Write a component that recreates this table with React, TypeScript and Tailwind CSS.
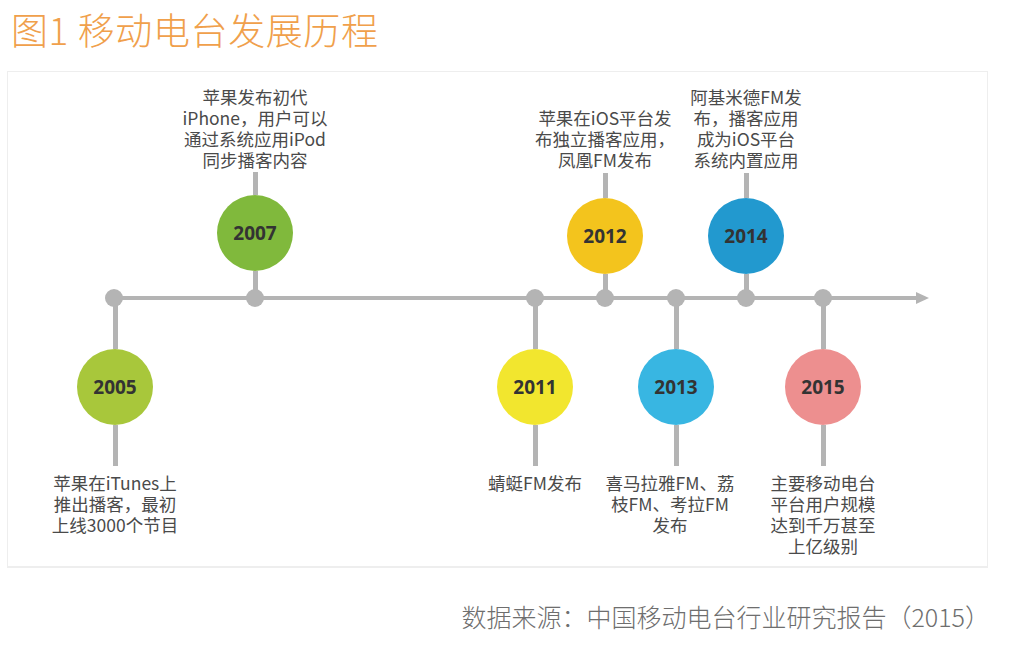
type Event = {
  year: string;
  side: "above" | "below";
  pos: string;
  circle: string;
  stemTop: string;
  stemBottom: string;
  text: string;
  lines: string[];
};

const events: Event[] = [
  {
    year: "2005",
    side: "below",
    pos: "left-[27px] top-[226px]",
    circle: "bg-[#a8c73b]",
    stemTop: "h-[51px]",
    stemBottom: "h-[41px]",
    text: "mt-[6px]",
    lines: ["苹果在iTunes上", "推出播客，最初", "上线3000个节目"],
  },
  {
    year: "2007",
    side: "above",
    pos: "left-[167px] bottom-[268px]",
    circle: "bg-[#80b93c]",
    stemTop: "h-[23px]",
    stemBottom: "h-[27px]",
    text: "mb-[2px]",
    lines: ["苹果发布初代", "iPhone，用户可以", "通过系统应用iPod", "同步播客内容"],
  },
  {
    year: "2011",
    side: "below",
    pos: "left-[447px] top-[226px]",
    circle: "bg-[#f2e62e]",
    stemTop: "h-[51px]",
    stemBottom: "h-[41px]",
    text: "mt-[6px]",
    lines: ["蜻蜓FM发布"],
  },
  {
    year: "2012",
    side: "above",
    pos: "left-[517px] bottom-[268px]",
    circle: "bg-[#f3c41d]",
    stemTop: "h-[25px]",
    stemBottom: "h-[24px]",
    text: "mb-[3px]",
    lines: ["苹果在iOS平台发", "布独立播客应用，", "凤凰FM发布"],
  },
  {
    year: "2013",
    side: "below",
    pos: "left-[588px] top-[226px]",
    circle: "bg-[#38b6e2]",
    stemTop: "h-[51px]",
    stemBottom: "h-[41px]",
    text: "mt-[6px] -translate-x-[6px]",
    lines: ["喜马拉雅FM、荔", "枝FM、考拉FM", "发布"],
  },
  {
    year: "2014",
    side: "above",
    pos: "left-[658px] bottom-[268px]",
    circle: "bg-[#2299cf]",
    stemTop: "h-[25px]",
    stemBottom: "h-[24px]",
    text: "mb-[3px]",
    lines: ["阿基米德FM发", "布，播客应用", "成为iOS平台", "系统内置应用"],
  },
  {
    year: "2015",
    side: "below",
    pos: "left-[735px] top-[226px]",
    circle: "bg-[#ed8f8f]",
    stemTop: "h-[51px]",
    stemBottom: "h-[41px]",
    text: "mt-[6px]",
    lines: ["主要移动电台", "平台用户规模", "达到千万甚至", "上亿级别"],
  },
];

const dots = [
  "left-[97px]",
  "left-[238px]",
  "left-[518px]",
  "left-[588px]",
  "left-[659px]",
  "left-[729px]",
  "left-[806px]",
];

function Label({ lines, className }: { lines: string[]; className: string }) {
  return (
    <div
      className={`flex flex-col items-center text-[17.5px] leading-[21px] text-[#4a4a4a] whitespace-nowrap ${className}`}
    >
      {lines.map((line) => (
        <span key={line}>{line}</span>
      ))}
    </div>
  );
}

function Node({ e }: { e: Event }) {
  const circle = (
    <div
      className={`w-[76px] h-[76px] rounded-full flex items-center justify-center ${e.circle}`}
    >
      <span className="font-['Open_Sans',sans-serif] font-bold text-[19px] text-[#333333]">
        {e.year}
      </span>
    </div>
  );
  return (
    <div className={`absolute w-[160px] flex flex-col items-center ${e.pos}`}>
      {e.side === "above" && <Label lines={e.lines} className={e.text} />}
      <div className={`w-[5px] bg-[#b4b4b4] ${e.stemTop}`} />
      {circle}
      <div className={`w-[5px] bg-[#b4b4b4] ${e.stemBottom}`} />
      {e.side === "below" && <Label lines={e.lines} className={e.text} />}
    </div>
  );
}

export default function App() {
  return (
    <div className="w-[1010px] h-[647px] bg-white overflow-hidden font-['Noto_Sans_CJK_SC',sans-serif]">
      <h1 className="mt-[11px] ml-[11px] text-[37px] leading-[37px] tracking-[0.6px] font-light text-[#f0a04b]">
        图1 移动电台发展历程
      </h1>

      <div className="relative mt-[23px] ml-[7px] w-[981px] h-[497px] border border-[#eeeeee] border-b-2">
        {/* axis */}
        <div className="absolute left-[106px] top-[224px] w-[804px] h-[4px] bg-[#b4b4b4]" />
        <svg
          className="absolute left-[908px] top-[220px]"
          width="13"
          height="12"
          viewBox="0 0 13 12"
        >
          <polygon points="0,0 13,6 0,12" fill="#b4b4b4" />
        </svg>

        {events.map((e) => (
          <Node key={e.year} e={e} />
        ))}

        {dots.map((d) => (
          <div
            key={d}
            className={`absolute top-[217px] w-[18px] h-[18px] rounded-full bg-[#b4b4b4] ${d}`}
          />
        ))}
      </div>

      <p className="mt-[36px] pr-[20px] text-right text-[25px] leading-[25px] font-light text-[#6e6e6e]">
        数据来源：中国移动电台行业研究报告（2015）
      </p>
    </div>
  );
}
